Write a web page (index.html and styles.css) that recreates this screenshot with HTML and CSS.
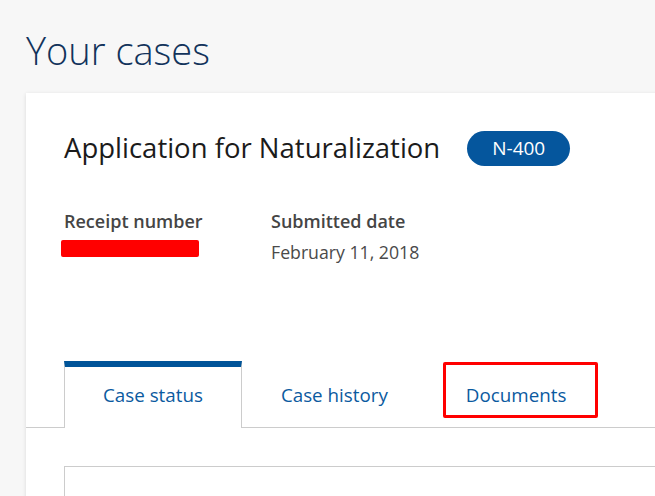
FILE: index.html
```html
<!DOCTYPE html>
<html lang="en">
<head>
  <meta charset="UTF-8">
  <title>Your cases</title>
  <meta name="viewport" content="width=device-width, initial-scale=1.0">
  <link rel="stylesheet" href="styles.css">
</head>
<body>

  <main class="page">
    <h1 class="page-title">Your cases</h1>

    <section class="case-card">
      <div class="case-head">
        <h2 class="case-title">Application for Naturalization</h2>
        <span class="form-badge">N-400</span>
      </div>

      <dl class="case-meta">
        <div class="meta-item meta-receipt">
          <dt>Receipt number</dt>
          <dd><span class="redacted"></span></dd>
        </div>
        <div class="meta-item">
          <dt>Submitted date</dt>
          <dd>February 11, 2018</dd>
        </div>
      </dl>

      <nav class="tabs">
        <a class="tab active" href="#">Case status</a>
        <a class="tab" href="#">Case history</a>
        <a class="tab marked" href="#">Documents</a>
      </nav>

      <div class="tab-panel"></div>
    </section>
  </main>

</body>
</html>
```

FILE: styles.css
```css
html, body {
  margin: 0;
  overflow: hidden;
}
body {
  background-color: #f7f7f7;
  font-family: "Open Sans", sans-serif;
  color: #333;
}
.page {
  padding: 27px 0 0 26px;
}
.page-title {
  margin: 0;
  font-size: 38px;
  font-weight: 300;
  line-height: 46px;
  color: #12335b;
}
.case-card {
  margin-top: 20px;
  width: 720px;
  height: 420px;
  background-color: #fff;
  box-shadow: 0 1px 4px rgba(0, 0, 0, 0.12);
  padding-top: 37px;
}
.case-head {
  display: flex;
  align-items: center;
  gap: 27px;
  padding-left: 38px;
}
.case-title {
  margin: 0;
  font-size: 27.5px;
  font-weight: 400;
  line-height: 36px;
  color: #1b1b1b;
}
.form-badge {
  display: inline-block;
  width: 103px;
  height: 35px;
  line-height: 35px;
  text-align: center;
  border-radius: 18px;
  background-color: #05569d;
  color: #fff;
  font-size: 19px;
}
.case-meta {
  display: flex;
  margin: 43px 0 0 0;
  padding-left: 38px;
}
.meta-item {
  margin: 0;
}
.meta-receipt {
  width: 207px;
}
.case-meta dt {
  font-size: 18px;
  font-weight: 600;
  color: #454545;
  line-height: 24px;
}
.case-meta dd {
  margin: 6px 0 0 0;
  font-size: 17.7px;
  color: #4a4a4a;
  line-height: 26px;
}
.redacted {
  display: block;
  width: 138px;
  height: 17px;
  margin: 7px 0 2px -3px;
  background-color: #ff0000;
  border-radius: 2px;
}
.tabs {
  display: flex;
  margin-top: 96px;
  padding-left: 38px;
  border-bottom: 1px solid #ccc;
}
.tab {
  position: relative;
  padding: 0 38px;
  height: 61px;
  line-height: 56px;
  margin-bottom: -1px;
  border-top: 6px solid transparent;
  border-left: 1px solid transparent;
  border-right: 1px solid transparent;
  font-size: 18.8px;
  color: #0b5aa0;
  text-decoration: none;
}
.tab.active {
  border-top-color: #005499;
  border-left-color: #ccc;
  border-right-color: #ccc;
  background-color: #fff;
}
.tab.marked::after {
  content: "";
  position: absolute;
  left: 15px;
  right: 6px;
  top: -5px;
  bottom: 10px;
  border: 3px solid #ff0000;
  border-radius: 2px;
}
.tab-panel {
  margin: 38px 0 0 38px;
  height: 60px;
  border: 1px solid #ccc;
  border-right: none;
}
```
